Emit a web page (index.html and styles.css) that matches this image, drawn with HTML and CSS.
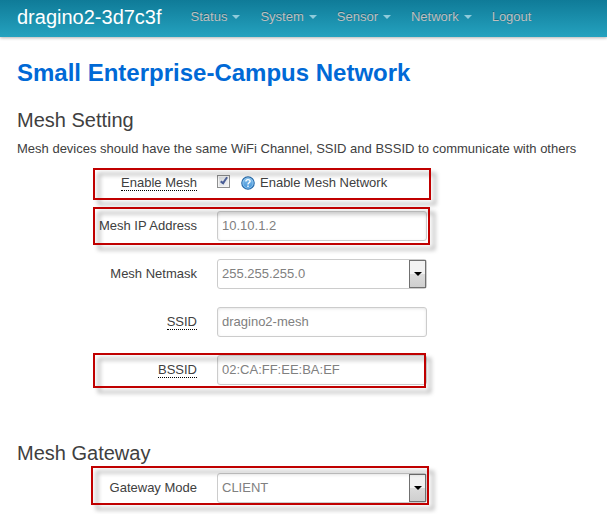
FILE: index.html
```html
<!DOCTYPE html>
<html lang="en">
<head>
<meta charset="utf-8">
<title>dragino2-3d7c3f</title>
<link rel="stylesheet" href="styles.css">
</head>
<body>
<header class="navbar">
  <a class="brand" href="#">dragino2-3d7c3f</a>
  <nav class="menu">
    <a class="menu-link has-caret" href="#">Status</a>
    <a class="menu-link has-caret" href="#">System</a>
    <a class="menu-link has-caret" href="#">Sensor</a>
    <a class="menu-link has-caret" href="#">Network</a>
    <a class="menu-link" href="#">Logout</a>
  </nav>
</header>
<main class="page">
  <h1 class="title">Small Enterprise-Campus Network</h1>
  <form>
    <section class="section">
      <h2 class="legend">Mesh Setting</h2>
      <p class="descr">Mesh devices should have the same WiFi Channel, SSID and BSSID to communicate with others</p>
      <div class="row row-check marked">
        <label class="label" for="enable"><span class="hint">Enable Mesh</span></label>
        <div class="check-field">
          <input class="check" type="checkbox" id="enable" checked>
          <svg class="help" viewBox="0 0 14 14" aria-hidden="true">
            <defs>
              <linearGradient id="ball" x1="0" y1="0" x2="0" y2="1">
                <stop offset="0" stop-color="#8cc4ee"/>
                <stop offset="1" stop-color="#3f8fd6"/>
              </linearGradient>
            </defs>
            <circle cx="7" cy="7" r="6.2" fill="url(#ball)" stroke="#2b6cab" stroke-width="1.2"/>
            <circle cx="7" cy="7" r="5.1" fill="none" stroke="#9bd0f5" stroke-width=".7"/>
            <path d="M4.9 5.5C4.9 3 9.1 3 9.1 5.3C9.1 6.7 7 6.8 7 8.4M7 9.5V10.9" fill="none" stroke="#fff" stroke-width="1.4"/>
          </svg>
          <span>Enable Mesh Network</span>
        </div>
      </div>
      <div class="row marked marked-address">
        <label class="label" for="ip">Mesh IP Address</label>
        <input class="control" type="text" id="ip" value="10.10.1.2">
      </div>
      <div class="row">
        <label class="label" for="netmask">Mesh Netmask</label>
        <div class="select">
          <select class="control" id="netmask"><option>255.255.255.0</option></select>
          <span class="select-button"></span>
        </div>
      </div>
      <div class="row">
        <label class="label" for="ssid"><span class="hint">SSID</span></label>
        <input class="control" type="text" id="ssid" value="dragino2-mesh">
      </div>
      <div class="row marked marked-bssid">
        <label class="label" for="bssid"><span class="hint">BSSID</span></label>
        <input class="control" type="text" id="bssid" value="02:CA:FF:EE:BA:EF">
      </div>
    </section>
    <section class="section">
      <h2 class="legend">Mesh Gateway</h2>
      <div class="row marked marked-gateway">
        <label class="label" for="mode">Gateway Mode</label>
        <div class="select">
          <select class="control" id="mode"><option>CLIENT</option></select>
          <span class="select-button"></span>
        </div>
      </div>
    </section>
  </form>
</main>
</body>
</html>
```
FILE: styles.css
```css
* { box-sizing: border-box; }

body {
  margin: 0;
  background: #fff;
  color: #404040;
  font: 13px/18px "Liberation Sans", Arial, sans-serif;
}

.navbar {
  display: flex;
  align-items: center;
  height: 37px;
  padding: 0 17px 4px;
  background: linear-gradient(#0f7b98, #25a2bf);
  box-shadow: 0 1px 3px rgba(0, 0, 0, .3);
}

.brand {
  margin-right: 29px;
  color: #fff;
  font-size: 20px;
  line-height: 24px;
  text-decoration: none;
  white-space: nowrap;
}

.menu { display: flex; gap: 20px; }

.menu-link {
  display: flex;
  align-items: center;
  gap: 5px;
  color: #bfbfbf;
  text-decoration: none;
  text-shadow: 0 -1px 0 rgba(0, 0, 0, .25);
}

.has-caret::after {
  content: "";
  border: 4px solid transparent;
  border-top-color: #8fcbdb;
  border-bottom: 0;
}

.page { padding: 20px 17px 11px; }

.title {
  margin: 0 0 18px;
  color: #0069d6;
  font-size: 24px;
  line-height: 32px;
}

.section + .section { margin-top: 55px; }

.legend {
  margin: 0 0 7px;
  font-size: 20px;
  font-weight: normal;
  line-height: 26px;
}

.descr { margin: 0 0 10px; }

.row {
  position: relative;
  display: grid;
  grid-template-columns: 180px 210px;
  column-gap: 20px;
  align-items: center;
  width: fit-content;
  height: 30px;
  margin-bottom: 18px;
}

.row:last-child { margin-bottom: 0; }

.row-check { margin-bottom: 13px; }

.label { text-align: right; }

.hint { border-bottom: 1px dotted #000; }

.control {
  appearance: none;
  width: 100%;
  height: 30px;
  margin: 0;
  padding: 0 4px 2px;
  border: 1px solid #ccc;
  border-radius: 3px;
  background: #fff;
  box-shadow: inset 0 1px 3px rgba(0, 0, 0, .1);
  color: #808080;
  font: inherit;
}

.select { position: relative; }

select.control { display: block; padding-bottom: 0; box-shadow: none; }

.select-button {
  position: absolute;
  top: 1px;
  right: 1px;
  bottom: 1px;
  display: grid;
  place-items: center;
  width: 17px;
  border: 1px solid #707070;
  background: linear-gradient(#f2f2f2 50%, #dcdcdc 50%, #cfcfcf);
  pointer-events: none;
}

.select-button::after {
  content: "";
  border: 4px solid transparent;
  border-top-color: #000;
  border-bottom: 0;
}

.check-field { display: flex; align-items: center; }

.check {
  appearance: none;
  width: 13px;
  height: 13px;
  margin: 0 11px 4px 0;
  border: 1px solid #8e8f8f;
  background: linear-gradient(135deg, #d3d6da, #f6f6f6);
  box-shadow: inset 0 0 0 1px #f4f4f4;
}

.check:checked::after {
  content: "";
  display: block;
  width: 2px;
  height: 6px;
  margin: 0 0 0 4px;
  border: solid #4b5f97;
  border-width: 0 2px 2px 0;
  transform: rotate(35deg);
}

.help { width: 14px; height: 14px; margin-right: 5px; }

/* Callout frames drawn over the rows they point out */
.marked::after {
  content: "";
  position: absolute;
  inset: 0 -4px -2px 76px;
  border: 2px solid #c00000;
  filter: drop-shadow(5px 5px 2px rgba(0, 0, 0, .35));
  pointer-events: none;
}

.marked-address::after { inset: -4px -3px -4px 76px; }

.marked-bssid::after { inset: -2px 1px -3px 76px; }

.marked-gateway::after { inset: -7px -2px -2px 74px; }
```
